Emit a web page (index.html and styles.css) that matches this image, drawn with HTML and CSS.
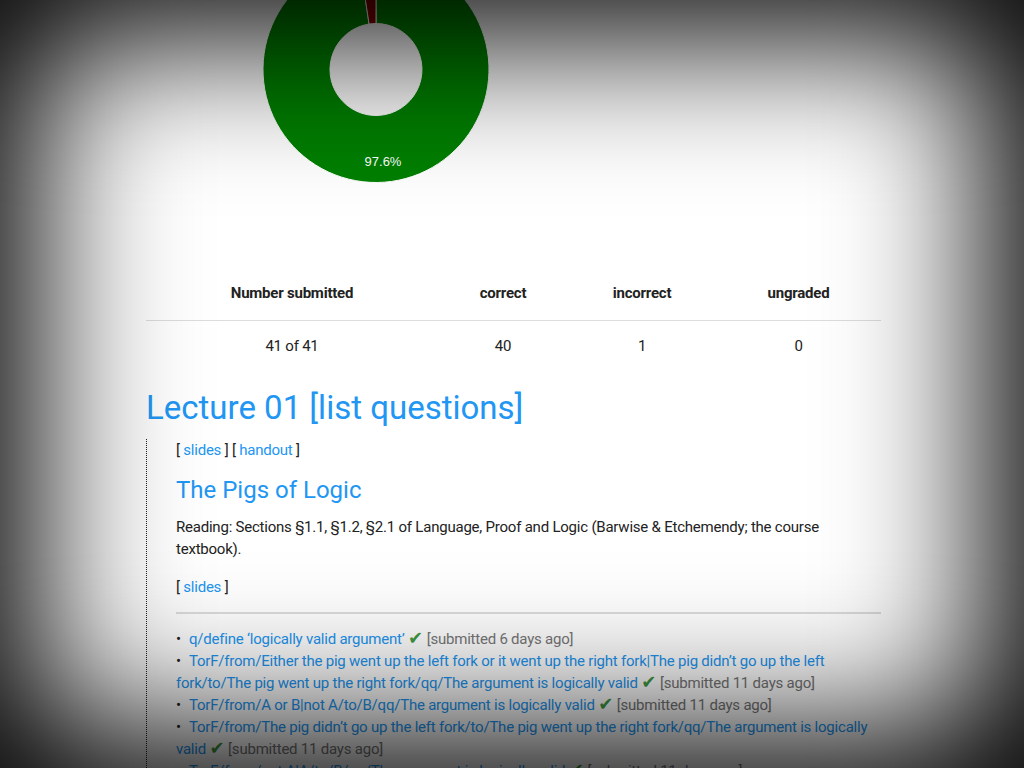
FILE: index.html
```html
<!DOCTYPE html>
<html lang="en">
<head>
<meta charset="utf-8">
<title>Lecture 01</title>
<link rel="stylesheet" href="styles.css">
</head>
<body>
<main class="container">
  <div class="chart">
    <svg class="donut" width="735" height="250" viewBox="0 0 735 250">
      <path class="slice-ok" d="M230 -43.5 A113 113 0 1 1 213.03 -42.22 L223.09 24.02 A46 46 0 1 0 230 23.5 Z"/>
      <path class="slice-bad" d="M213.03 -42.22 A113 113 0 0 1 230 -43.5 L230 23.5 A46 46 0 0 0 223.09 24.02 Z"/>
      <text class="slice-label" x="237" y="165.5" text-anchor="middle">97.6%</text>
    </svg>
  </div>

  <table class="stats">
    <thead>
      <tr>
        <th class="c1">Number submitted</th>
        <th class="c2">correct</th>
        <th class="c3">incorrect</th>
        <th class="c4">ungraded</th>
      </tr>
    </thead>
    <tbody>
      <tr>
        <td>41 of 41</td>
        <td>40</td>
        <td>1</td>
        <td>0</td>
      </tr>
    </tbody>
  </table>

  <h1 class="lecture-title"><a href="#">Lecture 01 [list questions]</a></h1>

  <section class="lecture">
    <p class="res">[ <a href="#">slides</a> ] [ <a href="#">handout</a> ]</p>
    <h2 class="unit-title"><a href="#">The Pigs of Logic</a></h2>
    <p class="reading">Reading: Sections §1.1, §1.2, §2.1 of Language, Proof and Logic (Barwise &amp; Etchemendy; the course textbook).</p>
    <p class="res">[ <a href="#">slides</a> ]</p>
    <hr class="sep">
    <ul class="questions">
      <li><a href="#">q/define ‘logically valid argument’</a> <span class="ok">✔</span> <span class="when">[submitted 6 days ago]</span></li>
      <li><a href="#">TorF/from/Either the pig went up the left fork or it went up the right fork|The pig didn’t go up the left fork/to/The pig went up the right fork/qq/The argument is logically valid</a> <span class="ok">✔</span> <span class="when">[submitted 11 days ago]</span></li>
      <li><a href="#">TorF/from/A or B|not A/to/B/qq/The argument is logically valid</a> <span class="ok">✔</span> <span class="when">[submitted 11 days ago]</span></li>
      <li><a href="#">TorF/from/The pig didn’t go up the left fork/to/The pig went up the right fork/qq/The argument is logically valid</a> <span class="ok">✔</span> <span class="when">[submitted 11 days ago]</span></li>
      <li><a href="#">TorF/from/not A|A/to/B/qq/The argument is logically valid</a> <span class="ok">✔</span> <span class="when">[submitted 11 days ago]</span></li>
      <li><a href="#">TorF/from/A|not A/to/B/qq/The argument is logically valid</a> <span class="ok">✔</span> <span class="when">[submitted 11 days ago]</span></li>
    </ul>
  </section>
</main>
<div class="vignette"></div>
</body>
</html>
```

FILE: styles.css
```css
html, body {
  margin: 0;
  padding: 0;
  background: #fff;
}

body {
  font-family: Roboto, "Noto Sans", "Liberation Sans", sans-serif;
  font-size: 15px;
  line-height: 22px;
  letter-spacing: -0.22px;
  color: #222;
  overflow: hidden;
}

a {
  color: #2196f3;
  text-decoration: none;
}

.container {
  width: 735px;
  margin-left: 146px;
}

.chart {
  height: 250px;
  overflow: hidden;
}

.donut {
  display: block;
  overflow: hidden;
}

.slice-ok {
  fill: #008000;
  stroke: #fff;
  stroke-width: 1;
}

.slice-bad {
  fill: #8b0000;
  stroke: #fff;
  stroke-width: 1;
}

.slice-label {
  fill: #fff;
  font-family: "Liberation Sans", Arial, sans-serif;
  font-size: 13px;
  letter-spacing: 0;
}

.stats {
  width: 735px;
  margin-top: 16px;
  border-collapse: collapse;
  table-layout: fixed;
}

.stats th,
.stats td {
  text-align: center;
  padding: 16px 0;
}

.stats th {
  font-weight: 700;
  border-bottom: 1px solid #ddd;
}

.stats td {
  padding: 14px 0;
}

.c1 { width: 292px; }
.c2 { width: 130px; }
.c3 { width: 148px; }
.c4 { width: 165px; }

.lecture-title {
  font-size: 33px;
  line-height: 35px;
  font-weight: 400;
  letter-spacing: 0;
  margin: 19px 0 14px;
}

.lecture {
  border-left: 1px dotted #222;
  padding-left: 29px;
}

.res {
  margin: 0;
}

.unit-title {
  font-size: 24px;
  line-height: 26px;
  font-weight: 400;
  letter-spacing: 0;
  margin: 16px 0 13px;
}

.reading {
  margin: 0 0 16px;
}

.sep {
  border: 0;
  border-top: 2px solid #ddd;
  margin: 14px 0 14px;
}

.questions {
  list-style: none;
  margin: 0;
  padding: 0;
}

.questions li::before {
  content: "•";
  display: inline-block;
  width: 13px;
  color: #222;
}

.ok {
  color: #3f9a3f;
  font-family: "DejaVu Sans", sans-serif;
  font-size: 18px;
  line-height: 1;
  letter-spacing: 0;
}

.when {
  color: #777;
}

.vignette {
  position: fixed;
  top: 0;
  left: 0;
  right: 0;
  bottom: 0;
  pointer-events: none;
  box-shadow: inset 0 0 150px 38px #000;
}
```
